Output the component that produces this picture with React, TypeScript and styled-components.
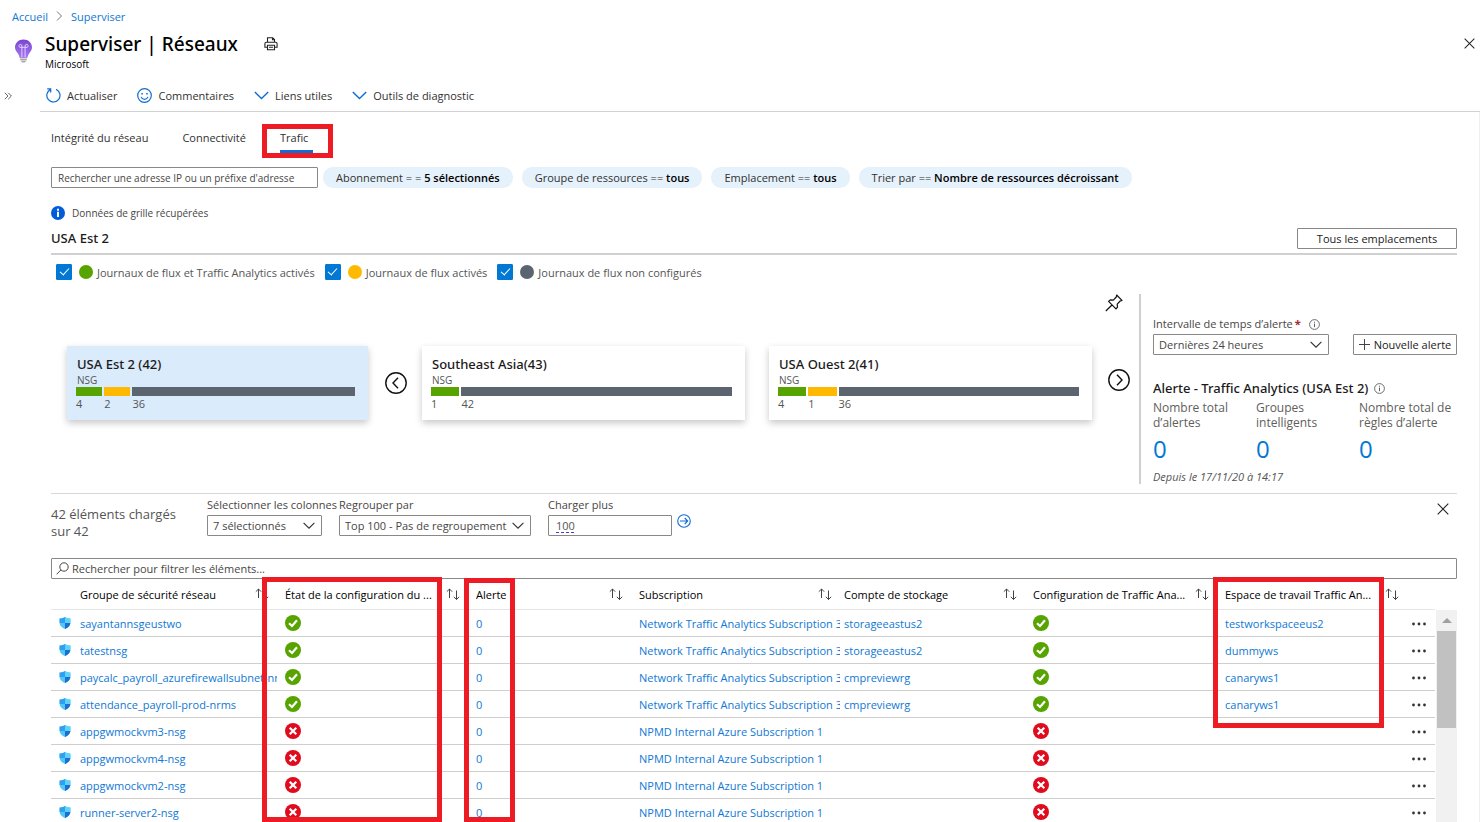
import React from "react";
import styled, { createGlobalStyle, css } from "styled-components";

const GlobalStyle = createGlobalStyle`
  *, *::before, *::after { box-sizing: border-box; }
  body {
    margin: 0;
    background: #fff;
    color: #323130;
    font-family: "Open Sans", "Noto Sans", sans-serif;
    font-size: 11px;
  }
  button, input, select { font: inherit; color: inherit; margin: 0; }
  button { background: none; border: 0; padding: 0; cursor: pointer; }
  a { color: #0f78d4; text-decoration: none; }
  svg { display: block; flex: none; }
`;

const blue = "#0f6cd4";
const red = "#ed1c24";

const Page = styled.div`
  display: flex;
  flex-direction: column;
  height: 100vh;
  overflow: hidden;
`;

const Breadcrumb = styled.nav`
  display: flex;
  align-items: center;
  gap: 8px;
  height: 32px;
  padding-left: 12px;
`;

const TitleRow = styled.header`
  display: flex;
  align-items: flex-start;
  height: 48px;
  padding: 0 5px 0 14px;
`;

const TitleIcon = styled.div`
  padding-top: 7px;
  width: 31px;
`;

const Title = styled.h1`
  margin: 0;
  color: #000;
  font-family: "Noto Sans", "Open Sans", sans-serif;
  font-size: 19px;
  font-weight: 500;
  line-height: 24px;
`;

const Subtitle = styled.p`
  margin: 1px 0 0;
  color: #000;
  font-size: 10px;
  line-height: 14px;
`;

const PrintButton = styled.button`
  margin: 5px 0 0 26px;
`;

const CloseBlade = styled.button`
  margin: 6px 0 0 auto;
`;

const Body = styled.div`
  display: flex;
  flex: 1;
  min-height: 0;
`;

const Rail = styled.aside`
  flex: none;
  width: 40px;
  padding: 8px 0 0 4px;
`;

const Main = styled.main`
  display: flex;
  flex: 1;
  flex-direction: column;
  min-width: 0;
`;

const Toolbar = styled.div`
  display: flex;
  flex: none;
  align-items: center;
  gap: 20px;
  height: 32px;
  padding-left: 6px;
  border-bottom: 1px solid #d2d2d2;
`;

const ToolButton = styled.button`
  display: flex;
  align-items: center;
  gap: 6px;
`;

const Content = styled.div`
  display: flex;
  flex: 1;
  flex-direction: column;
  min-height: 0;
  padding: 0 22px 0 11px;
  border-right: 1px solid #efefef;
`;

const Tabs = styled.div`
  display: flex;
  flex: none;
  gap: 34px;
  padding-top: 16px;
`;

const Tab = styled.button<{ $active?: boolean }>`
  position: relative;
  padding: 0 ${(p) => (p.$active ? "5px" : "0")} 2px 0;
  border-bottom: 3px solid ${(p) => (p.$active ? blue : "transparent")};
  line-height: 20px;
`;

const frame = css`
  border: 5px solid ${red};
  pointer-events: none;
`;

const TabFrame = styled.span`
  ${frame}
  position: absolute;
  inset: -4px -20px -8px -18px;
`;

const Filters = styled.div`
  display: flex;
  flex: none;
  margin-top: 14px;
  height: 21px;
`;

const AddressInput = styled.input`
  width: 267px;
  margin-right: 5px;
  padding: 0 6px;
  border: 1px solid #8a8886;
  border-radius: 1px;
  font-size: 10px;
  &::placeholder { color: #484644; opacity: 1; }
`;

const Chip = styled.button`
  margin-right: 9px;
  padding: 0 13px;
  border-radius: 10px;
  background: #e5f1fb;
  line-height: 21px;
  white-space: nowrap;
  b { color: #000; font-weight: 600; }
`;

const InfoLine = styled.div`
  display: flex;
  flex: none;
  align-items: center;
  gap: 7px;
  height: 16px;
  margin-top: 17px;
  color: #484644;
  font-size: 10px;
`;

const LocationRow = styled.div`
  display: flex;
  flex: none;
  align-items: flex-start;
  justify-content: space-between;
  margin-top: 7px;
  padding-bottom: 4px;
  border-bottom: 2px solid #d0d0d0;
`;

const heading = css`
  color: #1b1a19;
  font-family: "Noto Sans", "Open Sans", sans-serif;
  font-size: 13px;
  font-weight: 500;
  line-height: 20px;
`;

const LocationTitle = styled.h2`
  ${heading}
  margin: 0;
`;

const OutlineButton = styled.button<{ $width: number }>`
  display: flex;
  align-items: center;
  justify-content: center;
  gap: 4px;
  width: ${(p) => p.$width}px;
  height: 21px;
  border: 1px solid #8a8886;
  border-radius: 1px;
  color: #1b1a19;
  white-space: nowrap;
`;

const Legend = styled.div`
  display: flex;
  flex: none;
  gap: 10px;
  height: 16px;
  margin-top: 9px;
  padding-left: 5px;
`;

const LegendItem = styled.label`
  display: flex;
  align-items: center;
  color: #555;
`;

const Check = styled.input.attrs({ type: "checkbox" })`
  appearance: none;
  display: flex;
  justify-content: center;
  width: 16px;
  height: 16px;
  margin-right: 7px;
  border: 1px solid #0078d4;
  border-radius: 1px;
  &:checked { background: #0078d4; }
  &:checked::before {
    content: "";
    width: 5px;
    height: 9px;
    margin-top: 1px;
    border: solid #fff;
    border-width: 0 1px 1px 0;
    transform: rotate(42deg);
  }
`;

const Dot = styled.span<{ $color: string }>`
  width: 14px;
  height: 14px;
  margin-right: 4px;
  border-radius: 50%;
  background: ${(p) => p.$color};
`;

const Overview = styled.section`
  display: flex;
  flex: none;
  margin: 14px 0 9px;
`;

const Regions = styled.div`
  flex: 1;
  min-width: 0;
`;

const PinRow = styled.div`
  display: flex;
  justify-content: flex-end;
  padding-right: 16px;
`;

const Carousel = styled.div`
  display: flex;
  align-items: center;
  margin-top: 34px;
  padding: 0 9px 0 16px;
`;

const Card = styled.article<{ $selected?: boolean }>`
  flex: ${(p) => (p.$selected ? 279 : 301)} 1 0;
  min-width: 0;
  padding: 8px 13px 9px 9px;
  background: ${(p) => (p.$selected ? "#daebfc" : "#fff")};
  box-shadow: 0 3px 7px rgba(0, 0, 0, 0.22);
  & + & { margin-left: 24px; }
`;

const CardTitle = styled.h3`
  ${heading}
  margin: 0 0 0 1px;
`;

const CardKind = styled.div`
  margin-left: 1px;
  color: #555;
  font-size: 10px;
  line-height: 12px;
`;

const Segments = styled.div`
  display: flex;
  gap: 2px;
  margin-top: 1px;
`;

const Segment = styled.div<{ $color: string; $share: number }>`
  flex: ${(p) => p.$share} 1 0;
  border-top: 9px solid ${(p) => p.$color};
  padding-top: 1px;
  color: #555;
  font-size: 11px;
  line-height: 14px;
`;

const PrevButton = styled.button`
  margin: 0 15px 0 17px;
`;

const NextButton = styled.button`
  margin: 0 0 6px 16px;
`;

const AlertPanel = styled.aside`
  flex: none;
  width: 318px;
  padding: 22px 0 0 12px;
  border-left: 2px solid #d0d0d0;
`;

const AlertControls = styled.div`
  display: flex;
  align-items: flex-end;
  justify-content: space-between;
`;

const Field = styled.div<{ $width: number }>`
  display: flex;
  flex-direction: column;
  gap: 2px;
  width: ${(p) => p.$width}px;
`;

const FieldLabel = styled.label`
  display: flex;
  align-items: center;
  color: #484644;
  line-height: 16px;
  white-space: nowrap;
  em { margin: 0 8px 0 2px; color: #a4262c; font-style: normal; font-weight: 700; }
`;

const SelectBox = styled.div`
  position: relative;
  height: 21px;
  svg { position: absolute; top: 7px; right: 7px; pointer-events: none; }
`;

const Select = styled.select`
  appearance: none;
  width: 100%;
  height: 100%;
  padding: 0 20px 0 5px;
  border: 1px solid #8a8886;
  border-radius: 1px;
  background: #fff;
  color: #484644;
`;

const AlertTitle = styled.h2`
  ${heading}
  display: flex;
  align-items: center;
  gap: 6px;
  margin: 23px 0 2px;
  white-space: nowrap;
`;

const Stats = styled.dl`
  display: grid;
  grid-template-columns: repeat(3, 103px);
  margin: 0;
  dt { color: #605e5c; font-size: 12px; line-height: 15px; white-space: nowrap; }
  dd { margin: 5px 0 0; color: #0078d4; font-size: 24px; line-height: 28px; }
`;

const Since = styled.p`
  margin: 7px 0 0;
  color: #555;
  font-size: 11px;
  font-style: italic;
  line-height: 14px;
`;

const GridControls = styled.section`
  display: flex;
  flex: none;
  align-items: flex-start;
  gap: 17px;
  padding-top: 3px;
  border-top: 1px solid #d8d8d8;
`;

const LoadedText = styled.p`
  width: 139px;
  margin: 9px 0 0;
  color: #555;
  font-size: 13px;
  line-height: 17px;
`;

const NumberInput = styled.input`
  width: 100%;
  height: 21px;
  padding: 0 7px;
  border: 1px solid #8a8886;
  border-radius: 1px;
  color: #555;
  text-decoration: underline dashed 1px #4b3bd6;
  text-underline-offset: 2px;
`;

const LoadButton = styled.button`
  margin: 17px 0 0 -12px;
`;

const CloseGrid = styled.button`
  margin: 6px 8px 0 auto;
`;

const SearchBox = styled.label`
  display: flex;
  flex: none;
  align-items: center;
  gap: 3px;
  height: 21px;
  margin-top: 18px;
  padding-left: 4px;
  border: 1px solid #8a8886;
  border-radius: 1px;
  input {
    flex: 1;
    padding: 0;
    border: 0;
    outline: 0;
    background: none;
  }
  input::placeholder { color: #484644; opacity: 1; }
`;

const GridArea = styled.section`
  position: relative;
  display: flex;
  flex: 1;
  gap: 1px;
  min-height: 0;
`;

const GridScroll = styled.div`
  flex: 1;
  min-width: 0;
  overflow: hidden auto;
  scrollbar-width: none;
`;

const columns = [226, 191, 163, 209, 185, 192, 190, 28];

const Table = styled.table`
  width: 100%;
  border-collapse: separate;
  border-spacing: 0;
  table-layout: fixed;
  text-align: left;
`;

const HeadCell = styled.th<{ $indent?: number }>`
  height: 31px;
  padding: 0 8px 0 ${(p) => p.$indent ?? 8}px;
  border-bottom: 1px solid #e5e5e5;
  color: #000;
  font-weight: 400;
`;

const HeadLabel = styled.div`
  display: flex;
  align-items: center;
  justify-content: space-between;
  gap: 4px;
  span { overflow: hidden; text-overflow: ellipsis; white-space: nowrap; }
`;

const Cell = styled.td<{ $indent?: number }>`
  height: 27px;
  padding: 0 0 0 ${(p) => p.$indent ?? 8}px;
  border-bottom: 1px solid #cfcfcf;
  overflow: hidden;
  white-space: nowrap;
`;

const MenuCell = styled(Cell)`
  padding: 0 0 3px 5px;
`;

const NameLink = styled.div`
  display: flex;
  align-items: center;
  gap: 9px;
`;

const Scrollbar = styled.div`
  display: flex;
  flex-direction: column;
  align-items: center;
  width: 21px;
  margin-top: 31px;
  background: #f1f1f1;
`;

const ScrollArrow = styled.div`
  display: flex;
  align-items: center;
  height: 21px;
`;

const ScrollThumb = styled.div`
  width: 19px;
  height: 97px;
  background: #c1c1c1;
`;

const FrameLayer = styled.div`
  position: absolute;
  inset: -2px 22px 0 0;
  display: grid;
  grid-template-columns: ${columns.map((c) => `${c}fr`).join(" ")};
  pointer-events: none;
`;

const StatusFrame = styled.div`
  ${frame}
  grid-column: 2;
  margin: 0 26px 0 -15px;
`;

const AlertFrame = styled.div`
  ${frame}
  grid-column: 3;
  width: 51px;
  margin: 1px 0 0 -4px;
`;

const WorkspaceFrame = styled.div`
  ${frame}
  grid-column: 7;
  height: 151px;
  margin: 0 23px 0 -4px;
`;

const Chevron = ({ color = "#323130", size = 12 }: { color?: string; size?: number }) => (
  <svg width={size} height={size / 2 + 1} viewBox="0 0 14 8" fill="none" stroke={color} strokeWidth="1.3">
    <path d="M.7.9 7 7.1 13.3.9" />
  </svg>
);

const Cross = ({ size }: { size: number }) => (
  <svg width={size} height={size} viewBox="0 0 12 12" fill="none" stroke="#222" strokeWidth="1.1">
    <path d="M.7.7 11.3 11.3M11.3.7.7 11.3" />
  </svg>
);

const InfoOutline = () => (
  <svg width="11" height="11" viewBox="0 0 11 11" fill="none" stroke="#605e5c">
    <circle cx="5.5" cy="5.5" r="4.9" strokeWidth=".9" />
    <path d="M5.5 4.6v3.5M5.5 2.7v1" />
  </svg>
);

const Bulb = () => (
  <svg width="19" height="24" viewBox="0 0 19 24">
    <defs>
      <linearGradient id="bulb" x1="0" y1="0" x2="0" y2="1">
        <stop offset="0" stopColor="#7a45cf" />
        <stop offset="1" stopColor="#a67af4" />
      </linearGradient>
    </defs>
    <path
      d="M9.500 .5C4.600.5 1 4 1 8.300c0 3.200 1.900 4.800 3.200 6.600.9 1.300 1 2.600 1.400 3.600.2.400.5.500.9.500h6c.4 0 .7-.1.900-.5.4-1 .5-2.300 1.400-3.600C16.100 13.100 18 11.500 18 8.300 18 4 14.400.5 9.500.5Z"
      fill="url(#bulb)"
    />
    <path
      d="M7.900 18.500V8.200M11.100 18.500V8.200M7.900 8.300H5.800a1.500 1.500 0 1 1 2.100-1.400v1.400h3.200V6.900a1.500 1.500 0 1 1 2.100 1.400h-2.100"
      fill="none"
      stroke="#e3d2ff"
      strokeWidth="1"
    />
    <path d="M6.200 19.500h6.600v2H6.200zM7 22h5l-1 1.500H8z" fill="#a9a9a9" />
  </svg>
);

const Printer = () => (
  <svg width="14" height="14" viewBox="0 0 14 14" fill="none" stroke="#222" strokeWidth="1.1">
    <path d="M3.500 5V.8h5.200l1.800 1.700V5M3.500 10.300H.9V6.800C.9 5.800 1.500 5.200 2.500 5.200h9c1 0 1.600.6 1.600 1.600v3.500h-2.600" />
    <path d="M3.500 8.300h7v4.500h-7zM8.500.9v1.900h2M5 10.300h4" />
  </svg>
);

const Refresh = () => (
  <svg width="15" height="15" viewBox="0 0 15 15" fill="none" stroke={blue} strokeWidth="1.200">
    <path d="M4.300 1.600a6.600 6.600 0 1 0 5.800-.2M1.200.9h3.500v3.500" />
  </svg>
);

const Smile = () => (
  <svg width="15" height="15" viewBox="0 0 15 15" fill="none" stroke={blue} strokeWidth="1.200">
    <circle cx="7.500" cy="7.500" r="6.800" />
    <path d="M4 8.900c.6 1.500 1.900 2.400 3.500 2.400s2.900-.9 3.500-2.400" />
    <path d="M4.300 5.700h1.500M9.200 5.700h1.500" strokeWidth="1.600" />
  </svg>
);

const InfoSolid = () => (
  <svg width="14" height="14" viewBox="0 0 14 14">
    <circle cx="7" cy="7" r="7" fill="#015cda" />
    <path d="M7 5.800v5.200M7 2.800v1.900" stroke="#fff" strokeWidth="2" />
  </svg>
);

const Pin = () => (
  <svg width="18" height="18" viewBox="0 0 18 18" fill="none" stroke="#111" strokeWidth="1.200" strokeLinejoin="round">
    <path d="M11.600 1 17 6.400l-1.800.6-3 3.200.3 2.900-1.500 1.700L3.600 7.400l1.700-1.500 3 .2 3-3.100ZM7 11 .8 17" />
  </svg>
);

const CircleArrow = ({ next }: { next?: boolean }) => (
  <svg width="22" height="22" viewBox="0 0 22 22" fill="none" stroke="#111" strokeWidth="1.400">
    <circle cx="11" cy="11" r="10.200" />
    <path d={next ? "M9 5.800 14 11l-5 5.200" : "M13 5.800 8 11l5 5.200"} />
  </svg>
);

const GoArrow = () => (
  <svg width="14" height="14" viewBox="0 0 14 14" fill="none" stroke={blue} strokeWidth="1.100">
    <circle cx="7" cy="7" r="6.300" />
    <path d="M3 7h7.500M7.700 4l3 3-3 3" />
  </svg>
);

const Magnifier = () => (
  <svg width="13" height="13" viewBox="0 0 13 13" fill="none" stroke="#444" strokeWidth="1">
    <circle cx="8" cy="5" r="4.200" />
    <path d="M4.900 8 .6 12.300" />
  </svg>
);

const Plus = () => (
  <svg width="11" height="11" viewBox="0 0 11 11" stroke="#444">
    <path d="M5.500 0v11M0 5.500h11" />
  </svg>
);

const Sort = () => (
  <svg width="14" height="12" viewBox="0 0 14 12" fill="none" stroke="#444" strokeWidth="1">
    <path d="M3.500 10V1M.8 3.700 3.500 1l2.700 2.700M10.500 2.500v9M7.800 8.800l2.700 2.700 2.700-2.700" />
  </svg>
);

const Shield = () => (
  <svg width="12" height="12" viewBox="0 0 12 12">
    <path d="M6 0C4.500 1.100 2.800 1.400.6 1.500v4C.600 8.800 3.200 10.800 6 12Z" fill="#50c7f7" />
    <path d="M6 0c1.500 1.100 3.200 1.400 5.400 1.500v4c0 3.300-2.600 5.300-5.400 6.500Z" fill="#50c7f7" />
    <path d="M6 0C4.500 1.100 2.800 1.400.6 1.500V6H6Z" fill="#2f9ff0" />
    <path d="M6 6h5.400C11.200 9 8.700 10.900 6 12Z" fill="#1b6fd0" />
    <path d="M6 0c1.500 1.100 3.200 1.400 5.400 1.500V6H6Z" fill="#5ed2fb" />
  </svg>
);

const Status = ({ ok }: { ok: boolean }) => (
  <svg width="16" height="16" viewBox="0 0 16 16" fill="none" stroke="#fff" strokeWidth="2.200">
    <circle cx="8" cy="8" r="8" fill={ok ? "#57a300" : "#e00b1c"} stroke="none" />
    <path d={ok ? "M4 8.200 7 11l5-5.700" : "M4.700 4.700l6.600 6.600M11.300 4.700l-6.600 6.600"} />
  </svg>
);

const Dots = () => (
  <svg width="14" height="4" viewBox="0 0 14 4" fill="#333">
    <circle cx="1.500" cy="2" r="1.400" />
    <circle cx="7" cy="2" r="1.400" />
    <circle cx="12.500" cy="2" r="1.400" />
  </svg>
);

const green = "#57a300";
const yellow = "#ffb900";
const slate = "#5c6470";

const chips = [
  ["Abonnement = =", "5 sélectionnés"],
  ["Groupe de ressources ==", "tous"],
  ["Emplacement ==", "tous"],
  ["Trier par ==", "Nombre de ressources décroissant"],
];

const legend = [
  [green, "Journaux de flux et Traffic Analytics activés"],
  [yellow, "Journaux de flux activés"],
  [slate, "Journaux de flux non configurés"],
];

const headings: { text: string; indent?: number }[] = [
  { text: "Groupe de sécurité réseau", indent: 29 },
  { text: "État de la configuration du ..." },
  { text: "Alerte" },
  { text: "Subscription" },
  { text: "Compte de stockage", indent: 4 },
  { text: "Configuration de Traffic Ana..." },
  { text: "Espace de travail Traffic An..." },
];

type Row = { name: string; ok: boolean; sub: string; storage?: string; workspace?: string };

const analytics = "Network Traffic Analytics Subscription 3";
const npmd = "NPMD Internal Azure Subscription 1";

const rows: Row[] = [
  { name: "sayantannsgeustwo", ok: true, sub: analytics, storage: "storageeastus2", workspace: "testworkspaceeus2" },
  { name: "tatestnsg", ok: true, sub: analytics, storage: "storageeastus2", workspace: "dummyws" },
  { name: "paycalc_payroll_azurefirewallsubnet-nrms", ok: true, sub: analytics, storage: "cmpreviewrg", workspace: "canaryws1" },
  { name: "attendance_payroll-prod-nrms", ok: true, sub: analytics, storage: "cmpreviewrg", workspace: "canaryws1" },
  { name: "appgwmockvm3-nsg", ok: false, sub: npmd },
  { name: "appgwmockvm4-nsg", ok: false, sub: npmd },
  { name: "appgwmockvm2-nsg", ok: false, sub: npmd },
  { name: "runner-server2-nsg", ok: false, sub: npmd },
];

type RegionProps = { title: string; selected?: boolean; parts: [string, number, number][] };

const RegionCard = ({ title, selected, parts }: RegionProps) => (
  <Card $selected={selected}>
    <CardTitle>{title}</CardTitle>
    <CardKind>NSG</CardKind>
    <Segments>
      {parts.map(([color, count, share]) => (
        <Segment key={color} $color={color} $share={share}>
          {count}
        </Segment>
      ))}
    </Segments>
  </Card>
);

export default function App() {
  return (
    <Page>
      <GlobalStyle />
      <Breadcrumb aria-label="Fil d'Ariane">
        <a href="#accueil">Accueil</a>
        <svg width="7" height="10" viewBox="0 0 7 10" fill="none" stroke="#777">
          <path d="M1 .5 5.500 5 1 9.500" />
        </svg>
        <a href="#superviser">Superviser</a>
      </Breadcrumb>
      <TitleRow>
        <TitleIcon>
          <Bulb />
        </TitleIcon>
        <div>
          <Title>Superviser | Réseaux</Title>
          <Subtitle>Microsoft</Subtitle>
        </div>
        <PrintButton aria-label="Imprimer">
          <Printer />
        </PrintButton>
        <CloseBlade aria-label="Fermer">
          <Cross size={11} />
        </CloseBlade>
      </TitleRow>
      <Body>
        <Rail>
          <button aria-label="Développer le menu">
            <svg width="8" height="8" viewBox="0 0 8 8" fill="none" stroke="#666">
              <path d="M.8.8 4 4 .8 7.200M4.200.8 7.400 4 4.200 7.200" />
            </svg>
          </button>
        </Rail>
        <Main>
          <Toolbar>
            <ToolButton>
              <Refresh />
              Actualiser
            </ToolButton>
            <ToolButton>
              <Smile />
              Commentaires
            </ToolButton>
            <ToolButton>
              <Chevron color={blue} size={15} />
              Liens utiles
            </ToolButton>
            <ToolButton>
              <Chevron color={blue} size={15} />
              Outils de diagnostic
            </ToolButton>
          </Toolbar>
          <Content>
            <Tabs role="tablist">
              <Tab role="tab">Intégrité du réseau</Tab>
              <Tab role="tab">Connectivité</Tab>
              <Tab role="tab" $active aria-selected>
                Trafic
                <TabFrame />
              </Tab>
            </Tabs>
            <Filters>
              <AddressInput
                aria-label="Adresse IP"
                placeholder="Rechercher une adresse IP ou un préfixe d'adresse"
              />
              {chips.map(([name, value]) => (
                <Chip key={name}>
                  {name} <b>{value}</b>
                </Chip>
              ))}
            </Filters>
            <InfoLine>
              <InfoSolid />
              Données de grille récupérées
            </InfoLine>
            <LocationRow>
              <LocationTitle>USA Est 2</LocationTitle>
              <OutlineButton $width={160}>Tous les emplacements</OutlineButton>
            </LocationRow>
            <Legend>
              {legend.map(([color, text]) => (
                <LegendItem key={text}>
                  <Check defaultChecked />
                  <Dot $color={color} />
                  {text}
                </LegendItem>
              ))}
            </Legend>
            <Overview>
              <Regions>
                <PinRow>
                  <button aria-label="Épingler">
                    <Pin />
                  </button>
                </PinRow>
                <Carousel>
                  <RegionCard
                    selected
                    title="USA Est 2 (42)"
                    parts={[[green, 4, 2], [yellow, 2, 2], [slate, 36, 17]]}
                  />
                  <PrevButton aria-label="Précédent">
                    <CircleArrow />
                  </PrevButton>
                  <RegionCard title="Southeast Asia(43)" parts={[[green, 1, 2], [slate, 42, 19]]} />
                  <RegionCard title="USA Ouest 2(41)" parts={[[green, 4, 2], [yellow, 1, 2], [slate, 36, 17]]} />
                  <NextButton aria-label="Suivant">
                    <CircleArrow next />
                  </NextButton>
                </Carousel>
              </Regions>
              <AlertPanel>
                <AlertControls>
                  <Field $width={176}>
                    <FieldLabel htmlFor="interval">
                      Intervalle de temps d’alerte<em>*</em>
                      <InfoOutline />
                    </FieldLabel>
                    <SelectBox>
                      <Select id="interval">
                        <option>Dernières 24 heures</option>
                      </Select>
                      <Chevron />
                    </SelectBox>
                  </Field>
                  <OutlineButton $width={104}>
                    <Plus />
                    Nouvelle alerte
                  </OutlineButton>
                </AlertControls>
                <AlertTitle>
                  Alerte - Traffic Analytics (USA Est 2) <InfoOutline />
                </AlertTitle>
                <Stats>
                  <div>
                    <dt>Nombre total<br />d’alertes</dt>
                    <dd>0</dd>
                  </div>
                  <div>
                    <dt>Groupes<br />intelligents</dt>
                    <dd>0</dd>
                  </div>
                  <div>
                    <dt>Nombre total de<br />règles d’alerte</dt>
                    <dd>0</dd>
                  </div>
                </Stats>
                <Since>Depuis le 17/11/20 à 14:17</Since>
              </AlertPanel>
            </Overview>
            <GridControls>
              <LoadedText>42 éléments chargés sur 42</LoadedText>
              <Field $width={115}>
                <FieldLabel htmlFor="columns">Sélectionner les colonnes</FieldLabel>
                <SelectBox>
                  <Select id="columns">
                    <option>7 sélectionnés</option>
                  </Select>
                  <Chevron />
                </SelectBox>
              </Field>
              <Field $width={192}>
                <FieldLabel htmlFor="group">Regrouper par</FieldLabel>
                <SelectBox>
                  <Select id="group">
                    <option>Top 100 - Pas de regroupement</option>
                  </Select>
                  <Chevron />
                </SelectBox>
              </Field>
              <Field $width={124}>
                <FieldLabel htmlFor="more">Charger plus</FieldLabel>
                <NumberInput id="more" defaultValue="100" />
              </Field>
              <LoadButton aria-label="Charger">
                <GoArrow />
              </LoadButton>
              <CloseGrid aria-label="Fermer la grille">
                <Cross size={12} />
              </CloseGrid>
            </GridControls>
            <SearchBox>
              <Magnifier />
              <input aria-label="Filtrer" placeholder="Rechercher pour filtrer les éléments..." />
            </SearchBox>
            <GridArea>
              <GridScroll>
                <Table>
                  <colgroup>
                    {columns.map((width, i) => (
                      <col key={i} width={width} />
                    ))}
                  </colgroup>
                  <thead>
                    <tr>
                      {headings.map(({ text, indent }) => (
                        <HeadCell key={text} $indent={indent}>
                          <HeadLabel>
                            <span>{text}</span>
                            <Sort />
                          </HeadLabel>
                        </HeadCell>
                      ))}
                      <HeadCell />
                    </tr>
                  </thead>
                  <tbody>
                    {rows.map((row) => (
                      <tr key={row.name}>
                        <Cell>
                          <NameLink>
                            <Shield />
                            <a href="#nsg">{row.name}</a>
                          </NameLink>
                        </Cell>
                        <Cell>
                          <Status ok={row.ok} />
                        </Cell>
                        <Cell>
                          <a href="#alertes">0</a>
                        </Cell>
                        <Cell>
                          <a href="#abonnement">{row.sub}</a>
                        </Cell>
                        <Cell $indent={4}>{row.storage && <a href="#stockage">{row.storage}</a>}</Cell>
                        <Cell>
                          <Status ok={row.ok} />
                        </Cell>
                        <Cell>{row.workspace && <a href="#espace">{row.workspace}</a>}</Cell>
                        <MenuCell>
                          <button aria-label="Plus d'actions">
                            <Dots />
                          </button>
                        </MenuCell>
                      </tr>
                    ))}
                  </tbody>
                </Table>
              </GridScroll>
              <Scrollbar>
                <ScrollArrow>
                  <svg width="10" height="5" viewBox="0 0 10 5" fill="#a0a0a0">
                    <path d="M5 0l5 5H0z" />
                  </svg>
                </ScrollArrow>
                <ScrollThumb />
              </Scrollbar>
              <FrameLayer>
                <StatusFrame />
                <AlertFrame />
                <WorkspaceFrame />
              </FrameLayer>
            </GridArea>
          </Content>
        </Main>
      </Body>
    </Page>
  );
}
